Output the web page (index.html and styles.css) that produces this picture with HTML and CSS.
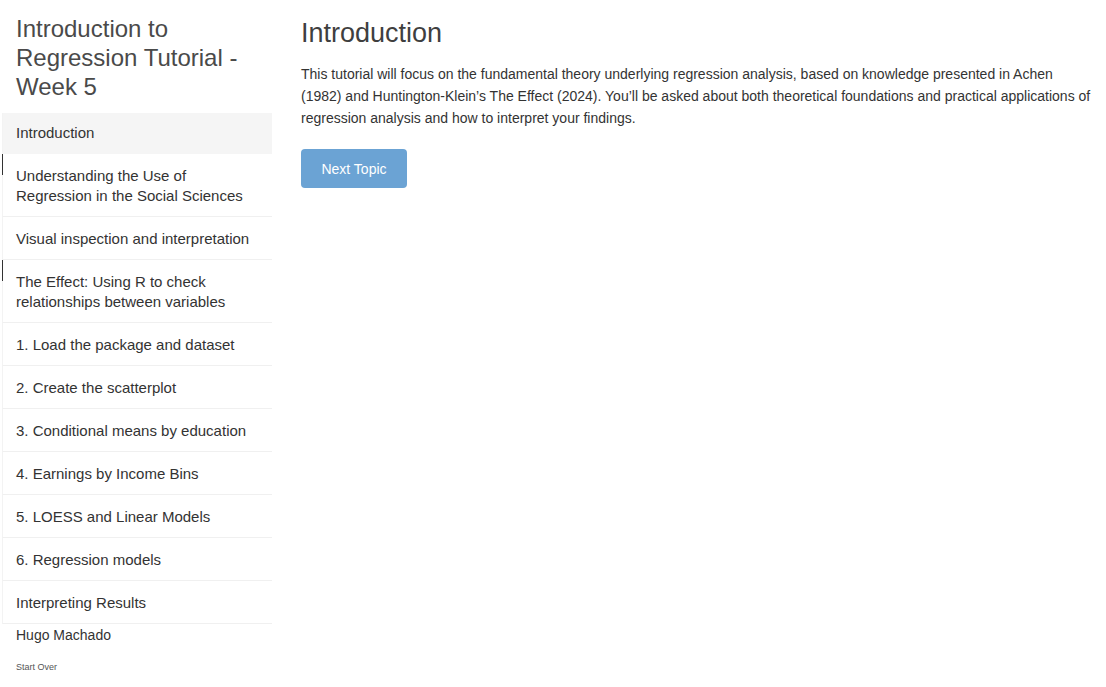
FILE: index.html
```html
<!DOCTYPE html>
<html lang="en">
<head>
<meta charset="utf-8">
<title>Introduction to Regression Tutorial - Week 5</title>
<link rel="stylesheet" href="styles.css">
</head>
<body>
<div class="page">
  <nav class="sidebar">
    <h1 class="tutorial-title">Introduction to Regression Tutorial - Week 5</h1>
    <ul class="topics">
      <li class="topic active">Introduction</li>
      <li class="topic multi">Understanding the Use of Regression in the Social Sciences</li>
      <li class="topic">Visual inspection and interpretation</li>
      <li class="topic multi">The Effect: Using R to check relationships between variables</li>
      <li class="topic">1. Load the package and dataset</li>
      <li class="topic">2. Create the scatterplot</li>
      <li class="topic">3. Conditional means by education</li>
      <li class="topic">4. Earnings by Income Bins</li>
      <li class="topic">5. LOESS and Linear Models</li>
      <li class="topic">6. Regression models</li>
      <li class="topic">Interpreting Results</li>
    </ul>
    <div class="author">Hugo Machado</div>
    <a class="start-over">Start Over</a>
  </nav>
  <main class="content">
    <h2 class="section-title">Introduction</h2>
    <p class="intro-text">This tutorial will focus on the fundamental theory underlying regression analysis, based on knowledge presented in Achen (1982) and Huntington-Klein’s The Effect (2024). You’ll be asked about both theoretical foundations and practical applications of regression analysis and how to interpret your findings.</p>
    <button class="next-btn">Next Topic</button>
  </main>
</div>
</body>
</html>
```
FILE: styles.css
```css
html, body {
  margin: 0;
  padding: 0;
  background: #fff;
}
body {
  font-family: "Liberation Sans", Arial, sans-serif;
  color: #333;
}
.page {
  display: grid;
  grid-template-columns: 272px 1fr;
  min-height: 687px;
}
.sidebar {
  display: flex;
  flex-direction: column;
}
.tutorial-title {
  margin: 14px 20px 12px 16px;
  font-size: 24px;
  line-height: 29px;
  font-weight: normal;
  color: #4a4a4a;
}
.topics {
  list-style: none;
  margin: 0 0 0 2px;
  padding: 0;
}
.topic {
  position: relative;
  padding: 12px 13px 10px 13px;
  font-size: 15px;
  line-height: 20px;
  color: #333;
  border-left: 1px solid #f3f3f3;
  border-bottom: 1px solid #f0f0f0;
}
.topic.active {
  background: #f5f5f5;
  padding-top: 10px;
  padding-bottom: 10px;
  border-bottom-color: #f5f5f5;
}
.topic.multi::before {
  content: "";
  position: absolute;
  left: -1px;
  top: 0;
  width: 1px;
  height: 21px;
  background: #333;
}
.author {
  margin: 1px 0 0 16px;
  font-size: 14px;
  line-height: 20px;
  color: #333;
}
.start-over {
  margin: 15px 0 0 16px;
  font-size: 9px;
  line-height: 14px;
  color: #555;
}
.content {
  padding: 18px 10px 0 29px;
}
.section-title {
  margin: 0;
  font-size: 27px;
  line-height: 30px;
  font-weight: normal;
  color: #3f3f3f;
}
.intro-text {
  margin: 15px 0 0 0;
  font-size: 14px;
  line-height: 22px;
  color: #333;
}
.next-btn {
  margin-top: 20px;
  width: 106px;
  height: 39px;
  border: none;
  border-radius: 4px;
  background: #6ba3d4;
  color: #fff;
  font-family: "Liberation Sans", Arial, sans-serif;
  font-size: 14px;
  padding: 0;
}
```
